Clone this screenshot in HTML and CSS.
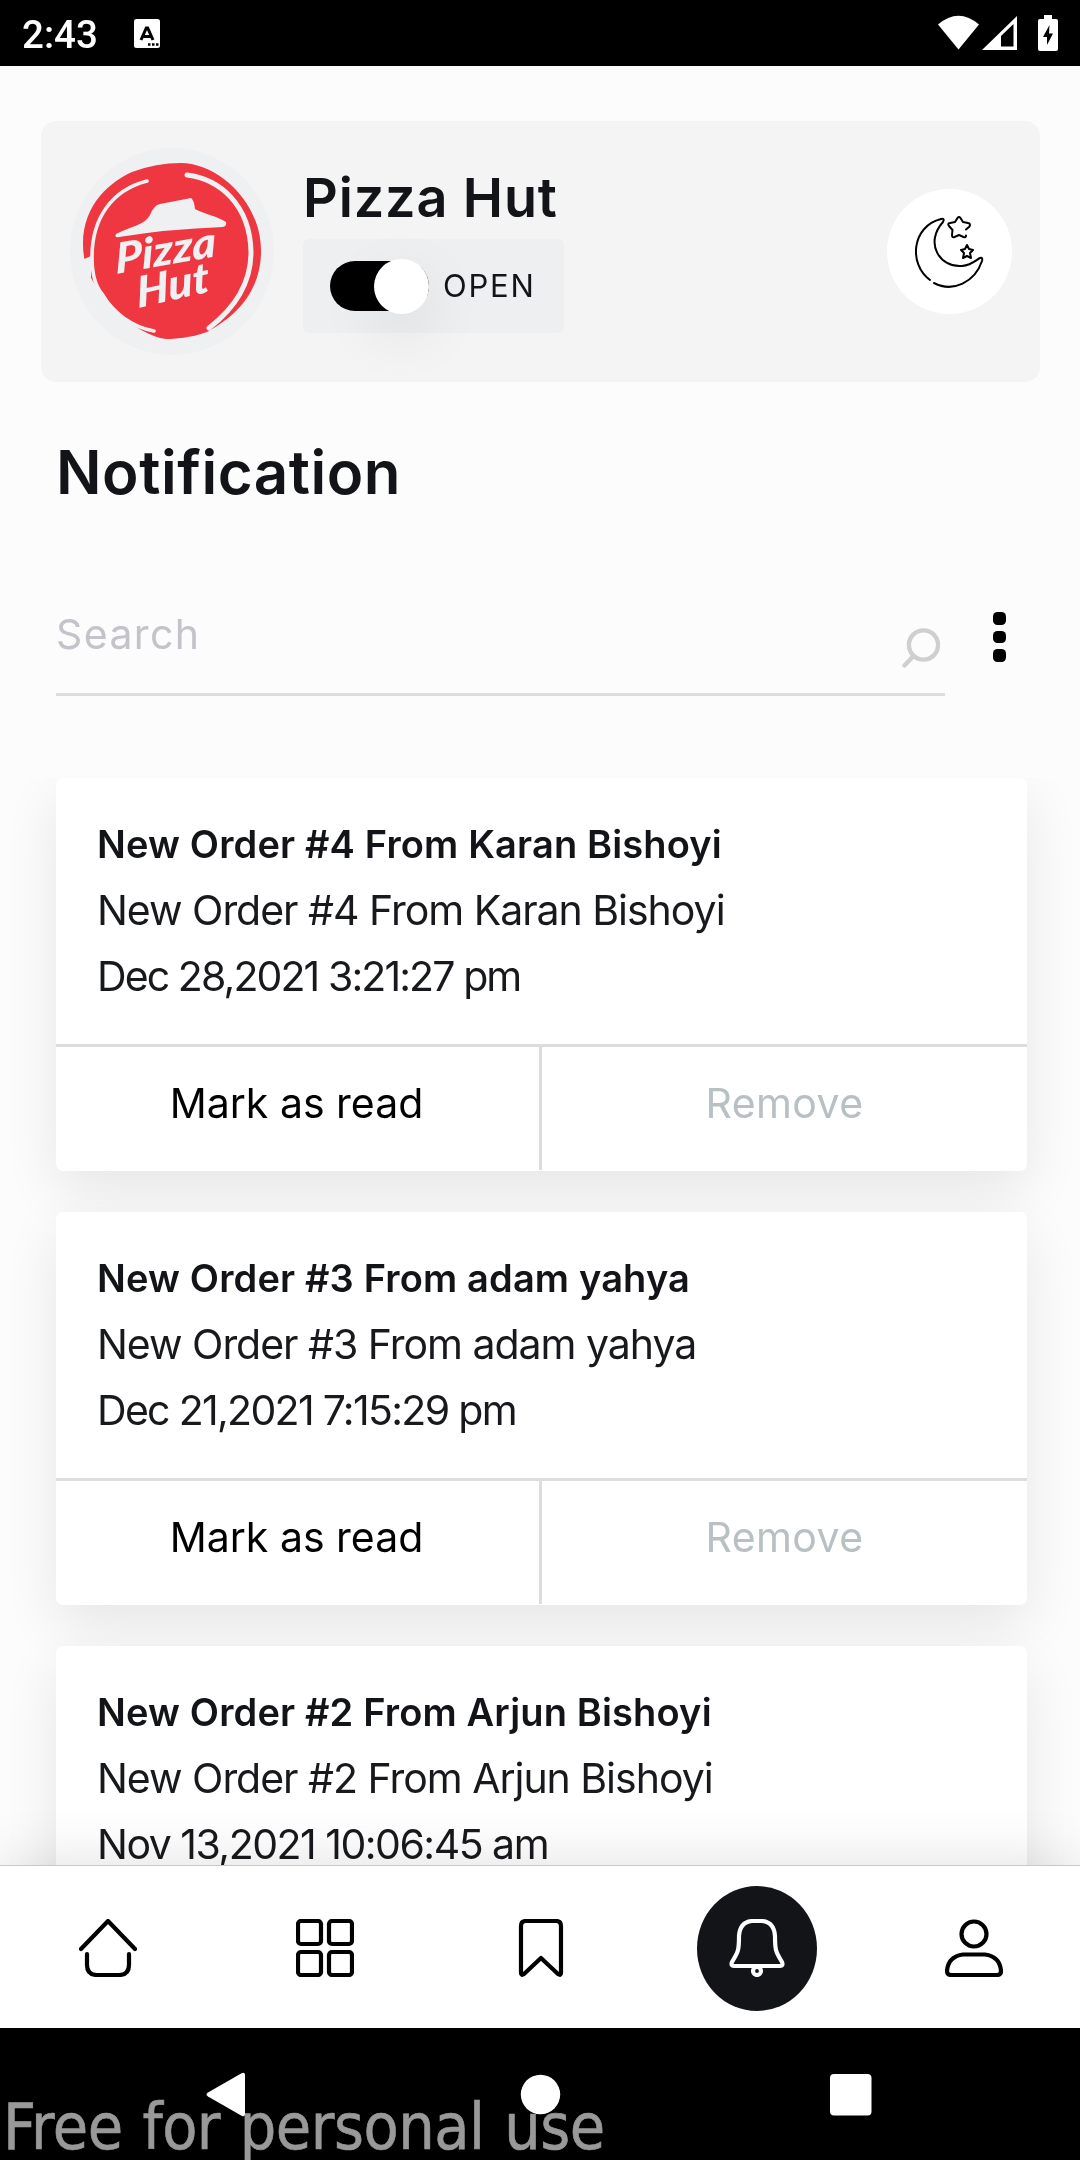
FILE: index.html
```html
<!DOCTYPE html>
<html lang="en">
<head>
<meta charset="utf-8">
<title>Notification</title>
<link rel="stylesheet" href="styles.css">
</head>
<body>
<div class="screen">
  <header class="status">
    <span class="clock">2:43</span>
    <svg class="status-app" width="26" height="29" viewBox="0 0 26 29"><rect width="26" height="29" rx="2.5" fill="#fff"/><path d="M7 21 12.300 9h1.400l5.300 12M9 17.500h8" fill="none" stroke="#000" stroke-width="3"/><path d="M14 25.500h2.500M18 25.500h2.500M22 25.500h2.500" stroke="#000" stroke-width="2.500"/></svg>
    <svg class="status-right" width="122" height="37" viewBox="0 0 122 37"><path d="M0 9.500Q20.500-8 41 9.500L20.500 34.500Z" fill="#fff"/><path d="M44 35 79 1v34Z" fill="#fff"/><path d="M63 21 75.500 9v22.500H63Z" fill="#000"/><path d="M106 0h8v4h4q2 0 2 2v28q0 2-2 2h-16q-2 0-2-2V6q0-2 2-2h4Z" fill="#fff"/><path d="M111.500 10 105 22h4v8l6-11.500h-4Z" fill="#000"/></svg>
  </header>

  <main class="content">
    <section class="shop">
      <svg class="logo" width="204" height="207" viewBox="0 0 204 207">
        <ellipse cx="102" cy="103.500" rx="102" ry="103.500" fill="#eff0f2"/>
        <path d="M111 15C146 15 191 52 191 103 191 150 157 173 137 184 120 190 105 191 96 191 72 188 45 164 35 150 27 139 13 125 13 96 13 55 42 33 62 24Q86 15 111 15Z" fill="#ee3741"/>
        <path d="M77 33C42 42 22 70 22 109 22 126 26 139 32 146 43 165 62 179 84 183" fill="none" stroke="#eff0f2" stroke-width="3.600" stroke-linecap="round"/>
        <path d="M117 27C150 31 180 57 181 104 181 139 161 163 139 180" fill="none" stroke="#eff0f2" stroke-width="5" stroke-linecap="round"/>
        <path d="M12 112 21 108 21 132 17 128 15 119 11 117Z" fill="#eff0f2"/>
        <path d="M46 86C62 78 75 77 80 67Q84 57 90 56L121 50Q124 52 125 61C134 66 147 68 156 74Q157 78 153 79Q98 81 49 89Q44 90 46 86Z" fill="#eff0f2"/>
        <g class="logo-text"><text transform="translate(46 126) rotate(-10) skewX(-8)" textLength="102" lengthAdjust="spacingAndGlyphs">Pizza</text><text transform="translate(68 160) rotate(-13) skewX(-8)" textLength="74" lengthAdjust="spacingAndGlyphs">Hut</text></g>
      </svg>
      <div class="shop-info">
        <h1 class="shop-name">Pizza Hut</h1>
        <div class="open-box">
          <span class="toggle"><span class="thumb"></span></span>
          <span class="open-label">OPEN</span>
        </div>
      </div>
      <div class="theme">
        <svg width="70" height="72" viewBox="0 0 70 72" fill="none" stroke="#000" stroke-width="2" stroke-linejoin="round" stroke-linecap="round"><path d="M15 64C-7 48-3 10 26 3Q30 2 28 6C9 27 25 52 47 50 57 49 61 44 65 42Q68 41 67 45C60 66 38 77 19 67"/><path d="M50 13.500l3.500-3q1.500-3-1.500-3.500l-5-1-2.500-4q-1.500-2-3 0l-2.500 4-5 1q-3 .5-1 3l3.500 4-.5 5q0 3 2.500 2l4.500-2 4.500 2q2.500 1 2.500-1.500" transform="translate(1 0)"/><path d="m52 29 2 4 4 1-3 3 1 5-4-2-4 2 1-5-3-3 4-1Z"/></svg>
      </div>
    </section>

    <h2 class="page-title">Notification</h2>

    <div class="search-row">
      <div class="search">
        <span class="placeholder">Search</span>
        <svg class="search-icon" width="38" height="40" viewBox="0 0 38 40" fill="none" stroke="#cfcfcf" stroke-width="4.400" stroke-linecap="round"><circle cx="21.500" cy="17" r="14.600"/><path d="M11 28.500 2.500 37.500"/></svg>
      </div>
      <div class="more"><i></i><i></i><i></i></div>
    </div>

    <div class="list">
      <article class="card">
        <div class="card-body"><h3>New Order #4 From Karan Bishoyi</h3><p>New Order #4 From Karan Bishoyi</p><p class="date">Dec 28,2021 3:21:27 pm</p></div>
        <div class="actions"><a class="read">Mark as read</a><a class="remove">Remove</a></div>
      </article>
      <article class="card">
        <div class="card-body"><h3>New Order #3 From adam yahya</h3><p>New Order #3 From adam yahya</p><p class="date">Dec 21,2021 7:15:29 pm</p></div>
        <div class="actions"><a class="read">Mark as read</a><a class="remove">Remove</a></div>
      </article>
      <article class="card">
        <div class="card-body"><h3>New Order #2 From Arjun Bishoyi</h3><p>New Order #2 From Arjun Bishoyi</p><p class="date">Nov 13,2021 10:06:45 am</p></div>
      </article>
    </div>
  </main>

  <nav class="tabs">
    <a class="tab"><svg viewBox="0 0 58 58"><path d="M2 30 29 2 56 30M8 35v11q0 10 10 10h22q10 0 10-10V35"/></svg></a>
    <a class="tab"><svg viewBox="0 0 58 58"><rect x="2" y="2" width="23" height="23" rx="3"/><rect x="33" y="2" width="23" height="23" rx="3"/><rect x="2" y="33" width="23" height="23" rx="3"/><rect x="33" y="33" width="23" height="23" rx="3"/></svg></a>
    <a class="tab"><svg viewBox="0 0 58 58"><path d="M14 2h30q5 0 5 5v47q0 3-3 1L29 39 12 55q-3 2-3-1V7q0-5 5-5Z"/></svg></a>
    <a class="tab active"><span class="disc"><svg viewBox="0 0 58 58"><path d="M24 2h10q12 1 13 15 0 10 1 14 1 4 6 12 1.500 4-2 4H6q-3.500 0-2-4 5-8 6-12 1-4 1-14Q12 3 24 2Z"/><circle cx="29" cy="52" r="4"/></svg></span></a>
    <a class="tab"><svg viewBox="0 0 58 58"><circle cx="29" cy="15" r="12.500"/><path d="M18 35.500h22q15 2 16 16.500 0 4-4 4H6q-4 0-4-4Q3 37.500 18 35.500Z"/></svg></a>
  </nav>

  <footer class="system">
    <svg class="keys" width="1080" height="132" viewBox="0 0 1080 132" fill="#fff"><path d="M242 45 208 64.500q-3 2 0 4L242 88q3 1 3-2V47q0-3-3-2Z"/><circle cx="540.500" cy="66.500" r="19.700"/><rect x="830" y="46" width="41.500" height="41.500" rx="4"/></svg>
    <span class="mark">Free for personal use</span>
  </footer>
</div>
</body>
</html>
```
FILE: styles.css
```css
* { box-sizing: border-box; margin: 0; padding: 0; }
body { background: #fcfcfc; font-family: Inter, "Open Sans", sans-serif; color: #131418; }
.screen { width: 1080px; height: 2160px; display: flex; flex-direction: column; overflow: hidden; }

.status { flex: none; height: 66px; background: #000; display: flex; align-items: flex-start; padding: 15px 20px 0 22px; }
.clock { width: 112px; font: 500 38.500px/39px Roboto, sans-serif; color: #fff; }
.status-app { margin-top: 4px; }
.status-right { margin-left: auto; }

.content { height: 1799px; display: flex; flex-direction: column; overflow: hidden; padding-top: 55px; }
.shop { flex: none; margin: 0 40px 0 41px; height: 261px; border-radius: 15px; background: #f4f4f4; display: flex; align-items: center; padding: 0 28px 0 29px; }
.logo-text { fill: #eff0f2; font: italic 900 42px Lato, sans-serif; }
.shop-info { margin-left: 29px; height: 207px; display: flex; flex-direction: column; align-items: flex-start; }
.shop-name { font-size: 54px; font-weight: 600; line-height: 100px; height: 91px; white-space: nowrap; letter-spacing: .85px; }
.open-box { width: 261px; height: 94px; border-radius: 6px; background: #eeeff1; display: flex; align-items: center; padding-left: 27px; }
.toggle { width: 99px; height: 50px; border-radius: 25px; background: #000; display: flex; align-items: center; justify-content: flex-end; margin-right: 14px; }
.thumb { width: 55px; height: 55px; border-radius: 50%; background: #fff; box-shadow: 0 20px 60px rgba(0,0,0,.1); flex: none; }
.open-label { font-size: 31px; letter-spacing: 1.8px; margin-top: -2px; }
.theme { margin-left: auto; width: 125px; height: 125px; border-radius: 50%; background: #fff; display: flex; align-items: center; justify-content: center; }

.page-title { flex: none; margin: 51px 0 0 56px; font-size: 60px; font-weight: 600; line-height: 78px; letter-spacing: .55px; }

.search-row { flex: none; display: flex; margin: 85px 0 82px 56px; height: 100px; }
.search { width: 889px; border-bottom: 3px solid #ddd; display: flex; justify-content: space-between; }
.placeholder { font-size: 41px; line-height: 77px; color: #c3c3c9; letter-spacing: 1.4px; }
.search-icon { margin: 32px 5px 0 0; }
.more { margin: 16px 0 0 48px; display: flex; flex-direction: column; gap: 6px; }
.more i { width: 13px; height: 12.500px; border-radius: 4.500px; background: #000; }

.list { flex: 1; overflow: hidden; padding: 0 53px 0 56px; display: flex; flex-direction: column; gap: 41px; }
.card { flex: none; height: 393px; border-radius: 7px; background: #fff; box-shadow: 0 20px 55px rgba(0,0,0,.09); }
.card-body { padding: 33px 42px 35px 41px; white-space: nowrap; }
.card-body h3 { font-size: 38px; font-weight: 600; line-height: 66px; letter-spacing: .15px; }
.card-body p { font-size: 41px; line-height: 66px; color: #18191c; letter-spacing: -1.02px; }
.card-body .date { letter-spacing: -1.9px; }
.card:nth-child(2) .date { letter-spacing: -1.69px; }
.card:nth-child(3) .date { letter-spacing: -1.5px; }
.actions { border-top: 3px solid #ddd; height: 126px; display: flex; }
.actions a { flex: none; width: 485px; text-align: center; font-size: 41px; line-height: 112px; }
.actions .read { width: 486px; color: #000; border-right: 3px solid #ddd; padding-right: 2px; }
.actions .remove { color: #b9c0c3; letter-spacing: .4px; }

.tabs { flex: none; width: 1082px; height: 163px; border-top: 1px solid #c8c8c8; background: #fff; box-shadow: 0 0 60px rgba(0,0,0,.13); display: flex; align-items: center; position: relative; padding-top: 2px; }
.tab { flex: 1; display: flex; justify-content: center; }
.tab svg { width: 58px; height: 58px; fill: none; stroke: #000; stroke-width: 4.200; stroke-linecap: round; stroke-linejoin: round; }
.disc { width: 120px; height: 125px; border-radius: 50%; background: #131418; display: flex; align-items: center; justify-content: center; }
.tab.active svg { stroke: #fff; }

.system { flex: none; height: 132px; background: #000; position: relative; }
.mark { position: absolute; left: 3px; top: 63px; font: 64px/72px "DejaVu Sans Condensed", "DejaVu Sans"; white-space: nowrap; color: #999; letter-spacing: -.5px; word-spacing: 2px; -webkit-text-stroke: .6px #999; mix-blend-mode: lighten; }
```
